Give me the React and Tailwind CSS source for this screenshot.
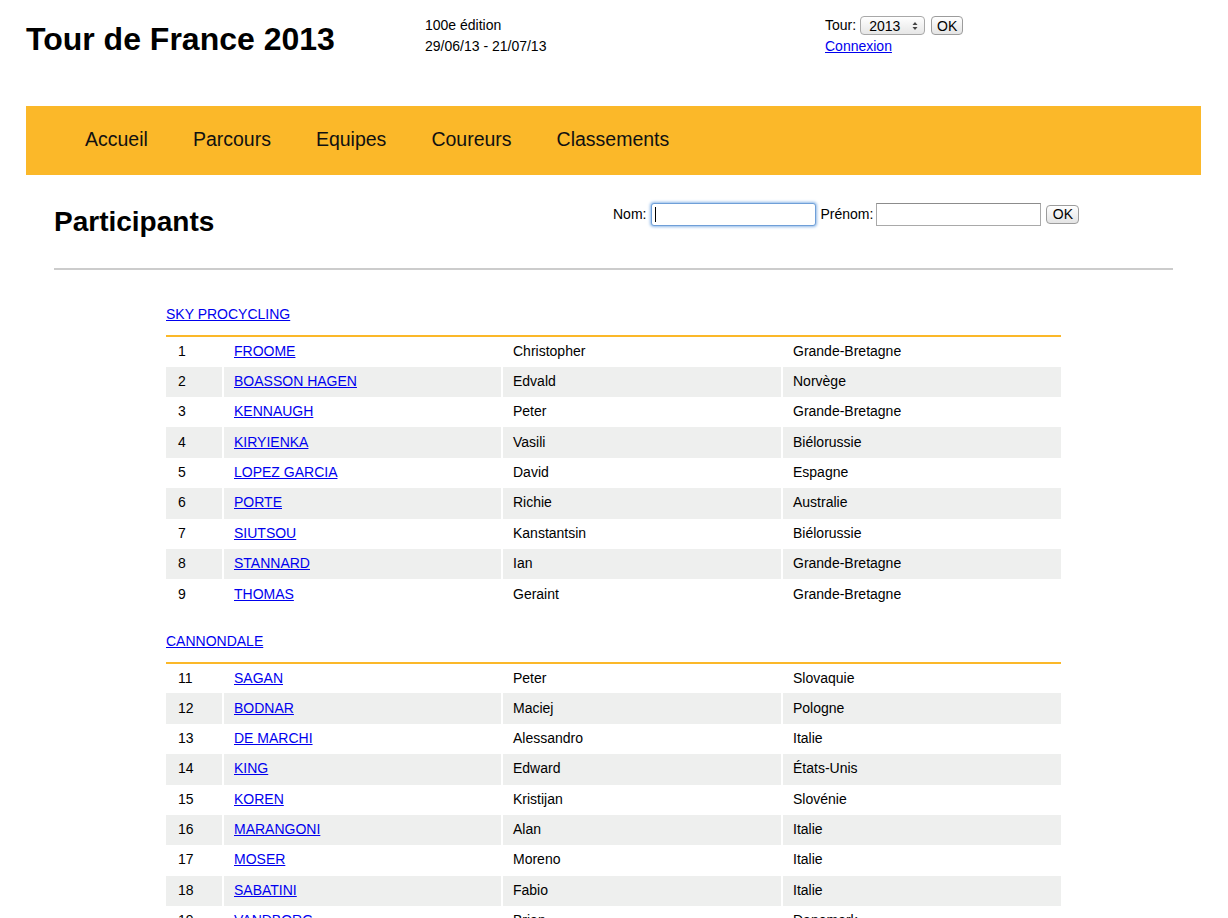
import React from "react";

const teams = [
  {
    name: "SKY PROCYCLING",
    riders: [
      ["1", "FROOME", "Christopher", "Grande-Bretagne"],
      ["2", "BOASSON HAGEN", "Edvald", "Norvège"],
      ["3", "KENNAUGH", "Peter", "Grande-Bretagne"],
      ["4", "KIRYIENKA", "Vasili", "Biélorussie"],
      ["5", "LOPEZ GARCIA", "David", "Espagne"],
      ["6", "PORTE", "Richie", "Australie"],
      ["7", "SIUTSOU", "Kanstantsin", "Biélorussie"],
      ["8", "STANNARD", "Ian", "Grande-Bretagne"],
      ["9", "THOMAS", "Geraint", "Grande-Bretagne"],
    ],
  },
  {
    name: "CANNONDALE",
    riders: [
      ["11", "SAGAN", "Peter", "Slovaquie"],
      ["12", "BODNAR", "Maciej", "Pologne"],
      ["13", "DE MARCHI", "Alessandro", "Italie"],
      ["14", "KING", "Edward", "États-Unis"],
      ["15", "KOREN", "Kristijan", "Slovénie"],
      ["16", "MARANGONI", "Alan", "Italie"],
      ["17", "MOSER", "Moreno", "Italie"],
      ["18", "SABATINI", "Fabio", "Italie"],
      ["19", "VANDBORG", "Brian", "Danemark"],
    ],
  },
];

function Btn({ className = "" }) {
  return (
    <div
      className={
        "inline-flex items-center justify-center rounded-[4px] border border-[#9c9c9c] bg-linear-to-b from-white to-[#e4e4e4] text-[14px] leading-none text-black " +
        className
      }
    >
      OK
    </div>
  );
}

function TeamTable({ team }) {
  return (
    <div className="mb-[23px]">
      <a href="#" className="block text-[14px] leading-[16px] text-[#0000ee] underline w-max">
        {team.name}
      </a>
      <div className="mt-[13px] w-[895px] border-t-2 border-[#fbb829]">
        {team.riders.map((r, i) => {
          const bg = i % 2 === 1 ? "bg-[#eeefee]" : "bg-white";
          return (
            <div
              key={r[0]}
              className={
                "grid grid-cols-[56px_277px_278px_278px] gap-x-[2px] text-[14px] leading-[16px] text-black " +
                (i === 0 ? "h-[29.7px]" : "h-[30.375px]")
              }
            >
              <div className={"flex items-center pb-[2px] pl-[12px] " + bg}>{r[0]}</div>
              <div className={"flex items-center pb-[2px] pl-[10px] " + bg}>
                <a href="#" className="text-[#0000ee] underline">
                  {r[1]}
                </a>
              </div>
              <div className={"flex items-center pb-[2px] pl-[10px] " + bg}>{r[2]}</div>
              <div className={"flex items-center pb-[2px] pl-[10px] " + bg}>{r[3]}</div>
            </div>
          );
        })}
      </div>
    </div>
  );
}

export default function App() {
  return (
    <div className="min-h-[918px] bg-white font-['Liberation_Sans',Arial,sans-serif] text-black overflow-hidden">
      {/* Header */}
      <div className="flex h-[106px] pl-[26px] pt-[15px]">
        <div className="w-[399px] mt-[2px] text-[32px] font-bold leading-[44px]">Tour de France 2013</div>
        <div className="w-[400px] text-[14px] leading-[21px]">
          <div>100e édition</div>
          <div>29/06/13 - 21/07/13</div>
        </div>
        <div className="text-[14px] leading-[21px]">
          <div className="flex items-center h-[21px]">
            <span>Tour:</span>
            <div className="ml-[4px] relative inline-flex items-center w-[65px] h-[19px] rounded-[4px] border border-[#a8a8a8] bg-linear-to-b from-white to-[#e6e6e6] pl-[8px] text-[14px] leading-none">
              2013
              <svg className="absolute right-[6px] top-[4px]" width="6" height="10" viewBox="0 0 6 10">
                <path d="M0.5 4 L3 1 L5.5 4 Z" fill="#444" />
                <path d="M0.5 6 L3 9 L5.5 6 Z" fill="#444" />
              </svg>
            </div>
            <Btn className="ml-[6px] w-[32px] h-[19px]" />
          </div>
          <a href="#" className="text-[#0000ee] underline">
            Connexion
          </a>
        </div>
      </div>

      {/* Nav */}
      <nav className="ml-[26px] w-[1175px] h-[69px] bg-[#fbb829] flex items-center pb-[2px] pl-[59px] gap-[45px] text-[19.5px] text-[#111]">
        <span>Accueil</span>
        <span>Parcours</span>
        <span>Equipes</span>
        <span>Coureurs</span>
        <span>Classements</span>
      </nav>

      {/* Content */}
      <div className="ml-[54px] w-[1119px]">
        <div className="flex items-start pt-[27px]">
          <h1 className="w-[559px] mt-[4px] text-[28px] font-bold leading-[32px]">Participants</h1>
          <div className="flex items-center h-[24px] text-[14px]">
            <span>Nom:</span>
            <div className="ml-[5px] w-[165px] h-[23px] rounded-[3px] border border-[#6f9fd8] shadow-[0_0_3px_1px_#8fb8e8] bg-white flex items-center pl-[3px]">
              <div className="w-px h-[15px] bg-black" />
            </div>
            <span className="ml-[4px]">Prénom:</span>
            <div className="ml-[3px] w-[165px] h-[23px] border border-[#a9a9a9] border-t-[#8c8c8c] bg-white" />
            <Btn className="ml-[5px] w-[33px] h-[19px]" />
          </div>
        </div>
        <div className="mt-[30px] h-[2px] bg-[#cccccc]" />
        <div className="pt-[36px] pl-[112px]">
          {teams.map((t) => (
            <TeamTable key={t.name} team={t} />
          ))}
        </div>
      </div>
    </div>
  );
}
